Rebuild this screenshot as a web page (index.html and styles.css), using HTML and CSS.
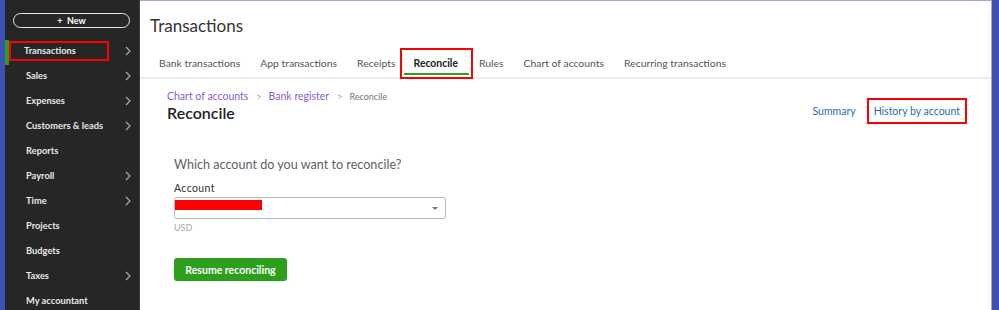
FILE: index.html
```html
<!DOCTYPE html>
<html lang="en">
<head>
    <meta charset="UTF-8">
    <title>Reconcile</title>
    <link rel="stylesheet" href="styles.css">
</head>
<body>
    <div class="frame">
        <nav class="sidebar">
            <button class="new-btn">+&nbsp;&nbsp;New</button>
            <ul class="menu">
                <li class="active"><span class="mark">Transactions</span><svg class="chev" viewBox="0 0 6 10"><polyline points="1,1 5,5 1,9"/></svg></li>
                <li>Sales<svg class="chev" viewBox="0 0 6 10"><polyline points="1,1 5,5 1,9"/></svg></li>
                <li>Expenses<svg class="chev" viewBox="0 0 6 10"><polyline points="1,1 5,5 1,9"/></svg></li>
                <li>Customers &amp; leads<svg class="chev" viewBox="0 0 6 10"><polyline points="1,1 5,5 1,9"/></svg></li>
                <li>Reports</li>
                <li>Payroll<svg class="chev" viewBox="0 0 6 10"><polyline points="1,1 5,5 1,9"/></svg></li>
                <li>Time<svg class="chev" viewBox="0 0 6 10"><polyline points="1,1 5,5 1,9"/></svg></li>
                <li>Projects</li>
                <li>Budgets</li>
                <li>Taxes<svg class="chev" viewBox="0 0 6 10"><polyline points="1,1 5,5 1,9"/></svg></li>
                <li>My accountant</li>
            </ul>
        </nav>

        <main class="main">
            <h1 class="page-title">Transactions</h1>
            <div class="tabs">
                <span class="tab">Bank transactions</span>
                <span class="tab">App transactions</span>
                <span class="tab">Receipts</span>
                <span class="tab current mark">Reconcile</span>
                <span class="tab">Rules</span>
                <span class="tab">Chart of accounts</span>
                <span class="tab">Recurring transactions</span>
            </div>

            <div class="head">
                <div>
                    <div class="crumbs">
                        <a>Chart of accounts</a><span class="sep">&gt;</span><a>Bank register</a><span class="sep">&gt;</span><span class="here">Reconcile</span>
                    </div>
                    <h2 class="title">Reconcile</h2>
                </div>
                <div class="links">
                    <a>Summary</a>
                    <a class="mark">History by account</a>
                </div>
            </div>

            <section class="form">
                <h3 class="question">Which account do you want to reconcile?</h3>
                <label class="label">Account</label>
                <div class="select">
                    <span class="redact"></span>
                    <span class="caret"></span>
                </div>
                <div class="currency">USD</div>
                <button class="resume">Resume reconciling</button>
            </section>
        </main>
    </div>
</body>
</html>
```

FILE: styles.css
```css
body {
    margin: 0;
    overflow: hidden;
    font-family: Lato, "Open Sans", sans-serif;
}
.frame {
    display: flex;
    width: 999px;
    height: 310px;
    background: #3f51b5;
    padding-left: 5px;
    box-sizing: border-box;
}

/* sidebar */
.sidebar {
    width: 135px;
    background: #262626;
    border-right: 1px solid #3a3a3a;
    padding-top: 13px;
    box-sizing: border-box;
}
.new-btn {
    display: block;
    width: 117px;
    height: 15px;
    margin-left: 8px;
    border: 1.5px solid #e6e6e6;
    border-radius: 8px;
    background: transparent;
    color: #fff;
    font-family: Lato, sans-serif;
    font-size: 9px;
    font-weight: 700;
    padding: 0;
    line-height: 12px;
}
.menu {
    list-style: none;
    margin: 12px 0 0;
    padding: 0;
}
.menu li {
    position: relative;
    height: 25px;
    line-height: 21px;
    padding-left: 21px;
    color: #e8e8e8;
    font-size: 9.3px;
    font-weight: 700;
}
.menu li.active {
    border-left: 4px solid #2ca01c;
    padding-left: 17px;
}
.menu li.active .mark {
    display: inline-block;
    width: 83px;
    height: 16px;
    line-height: 16px;
    margin: 3px 0 0 -15px;
    padding-left: 13px;
    vertical-align: top;
}
.chev {
    position: absolute;
    right: 8px;
    top: 6px;
    width: 6px;
    height: 10px;
    fill: none;
    stroke: #a8a8a8;
    stroke-width: 1.2;
}
.mark {
    outline: 2px solid #ff0000;
}

/* main */
.main {
    flex: 1;
    background: #fff;
    border-top: 1px solid #9fa8da;
    border-right: 1px solid #9fa8da;
    margin-right: 7px;
    padding-top: 15px;
}
.page-title {
    margin: 0 0 0 10px;
    font-size: 17px;
    font-weight: 400;
    color: #333;
    line-height: 20px;
}
.tabs {
    display: flex;
    margin-top: 14px;
    padding-left: 19px;
    height: 27px;
    border-bottom: 2px solid #ececec;
}
.tab {
    font-size: 10.4px;
    color: #555;
    line-height: 14px;
    padding-top: 6px;
    margin-right: 20px;
}
.tab.current {
    color: #222;
    font-weight: 700;
    padding: 6px 13px 0 12px;
    margin: 0 8px 0 -14px;
    background: linear-gradient(#2ca01c, #2ca01c) no-repeat 2px 23px / calc(100% - 4px) 2px;
}

.head {
    display: flex;
    justify-content: space-between;
    align-items: flex-start;
    padding: 11px 26px 0 27px;
}
.crumbs {
    font-size: 10.5px;
    line-height: 12px;
}
.crumbs a {
    color: #8d5bd1;
}
.crumbs .sep {
    color: #999;
    font-size: 9px;
    margin: 0 7px 0 8px;
}
.crumbs .here {
    color: #777;
    font-size: 9px;
}
.title {
    margin: 0;
    font-size: 16px;
    font-weight: 600;
    color: #222;
    line-height: 20px;
}
.links {
    display: flex;
    gap: 8px;
    margin-top: 10px;
    font-size: 10.5px;
}
.links a {
    color: #2a6bb0;
    line-height: 14px;
    padding: 4px 5px;
}

.form {
    padding: 33px 0 0 34px;
}
.question {
    margin: 0;
    font-size: 12.6px;
    font-weight: 400;
    color: #5f6066;
    line-height: 18px;
}
.label {
    display: block;
    margin-top: 8px;
    font-size: 10.5px;
    letter-spacing: 0.4px;
    color: #333;
    line-height: 12px;
}
.select {
    position: relative;
    width: 270px;
    height: 20px;
    margin-top: 3px;
    border: 1px solid #bbb;
    border-radius: 2px;
}
.redact {
    position: absolute;
    left: 0;
    top: 2px;
    width: 87px;
    height: 10px;
    background: #ff0000;
}
.caret {
    position: absolute;
    right: 7px;
    top: 9px;
    border-left: 3px solid transparent;
    border-right: 3px solid transparent;
    border-top: 3px solid #777;
}
.currency {
    margin-top: 3px;
    font-size: 9px;
    color: #aaa;
    line-height: 11px;
}
.resume {
    display: block;
    margin-top: 25px;
    width: 113px;
    height: 23px;
    border: none;
    border-radius: 3px;
    background: #2ca01c;
    color: #fff;
    font-family: Lato, sans-serif;
    font-size: 10.5px;
    font-weight: 700;
    padding: 0;
}
```
